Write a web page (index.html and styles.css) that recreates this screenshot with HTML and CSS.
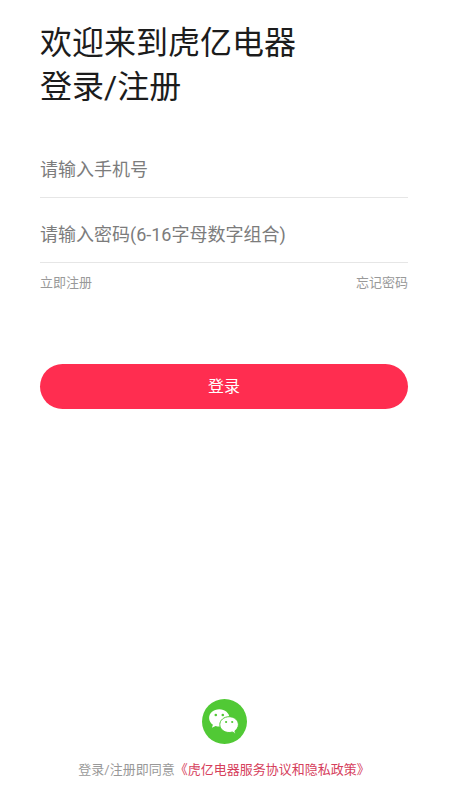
FILE: index.html
```html
<!DOCTYPE html>
<html lang="zh-CN">
<head>
<meta charset="utf-8">
<meta name="viewport" content="width=device-width, initial-scale=1">
<title>登录/注册</title>
<link rel="stylesheet" href="styles.css">
</head>
<body>
<main class="page">
  <h1 class="title">欢迎来到虎亿电器<br>登录/注册</h1>
  <form class="form">
    <input class="field" type="tel" aria-label="手机号" placeholder="请输入手机号">
    <input class="field" type="password" aria-label="密码" placeholder="请输入密码(6-16字母数字组合)">
    <div class="links">
      <a class="link" href="#register">立即注册</a>
      <a class="link" href="#forgot">忘记密码</a>
    </div>
    <button class="submit" type="submit">登录</button>
  </form>
  <footer class="footer">
    <button class="wechat" type="button" aria-label="微信登录">
      <svg class="wechat-icon" viewBox="0 0 45 45" aria-hidden="true">
        <circle cx="22.5" cy="22.5" r="22.5" fill="#51c935"/>
        <path fill="#fff" d="M17.300 10.300c-5.700 0-10.200 3.900-10.200 8.700 0 2.800 1.500 5.200 3.800 6.800l-1 3 3.700-1.800c1.200.400 2.400.600 3.700.600 5.700 0 10.200-3.900 10.200-8.600s-4.500-8.700-10.200-8.700z"/>
        <path fill="#fff" stroke="#51c935" stroke-width="1" d="M27.100 17.700c-5.200 0-9.300 3.500-9.300 7.900s4.100 7.900 9.300 7.900c1.100 0 2.200-.200 3.200-.500l3.500 1.900-.900-3c2.100-1.500 3.500-3.700 3.500-6.300 0-4.400-4.100-7.900-9.300-7.900z"/>
        <g fill="#51c935">
          <circle cx="13.800" cy="16" r="1.300"/>
          <circle cx="20.800" cy="16" r="1.300"/>
          <circle cx="24.100" cy="23" r="1.100"/>
          <circle cx="30.200" cy="23" r="1.100"/>
        </g>
      </svg>
    </button>
    <p class="terms">登录/注册即同意<a class="terms-link" href="#terms">《虎亿电器服务协议和隐私政策》</a></p>
  </footer>
</main>
</body>
</html>
```
FILE: styles.css
```css
* {
  box-sizing: border-box;
}

body {
  margin: 0;
  background: #fff;
  color: #1c1c1c;
  font-family: Roboto, "Noto Sans CJK SC", sans-serif;
}

.page {
  display: flex;
  flex-direction: column;
  min-height: 100vh;
  padding: 21px 42px 20px 40px;
}

.title {
  margin: 0;
  font-size: 32px;
  font-weight: 400;
  line-height: 44px;
}

.form {
  display: flex;
  flex-direction: column;
  margin-top: 24px;
}

.field {
  width: 100%;
  height: 65px;
  padding: 8px 0 0;
  border: 0;
  border-bottom: 1px solid #e6e6e6;
  border-radius: 0;
  outline: 0;
  background: transparent;
  color: #1c1c1c;
  font-family: inherit;
  font-size: 18px;
}

.field::placeholder {
  color: #7c7c7c;
  opacity: 1;
}

.links {
  display: flex;
  justify-content: space-between;
  margin-top: 10px;
  font-size: 13px;
  line-height: 20px;
}

.link {
  color: #999;
  text-decoration: none;
}

.submit {
  height: 45px;
  margin-top: 71px;
  padding: 0 0 4px;
  border: 0;
  border-radius: 23px;
  background: #ff2d50;
  color: #fff;
  font-family: inherit;
  font-size: 16px;
}

.footer {
  display: flex;
  flex-direction: column;
  align-items: center;
  margin-top: auto;
}

.wechat {
  width: 45px;
  height: 45px;
  padding: 0;
  border: 0;
  border-radius: 50%;
  background: transparent;
}

.wechat-icon {
  display: block;
  width: 100%;
}

.terms {
  margin: 16px 0 0;
  color: #999;
  font-size: 13px;
  line-height: 20px;
  white-space: nowrap;
}

.terms-link {
  color: #d6405c;
  text-decoration: none;
}
```
